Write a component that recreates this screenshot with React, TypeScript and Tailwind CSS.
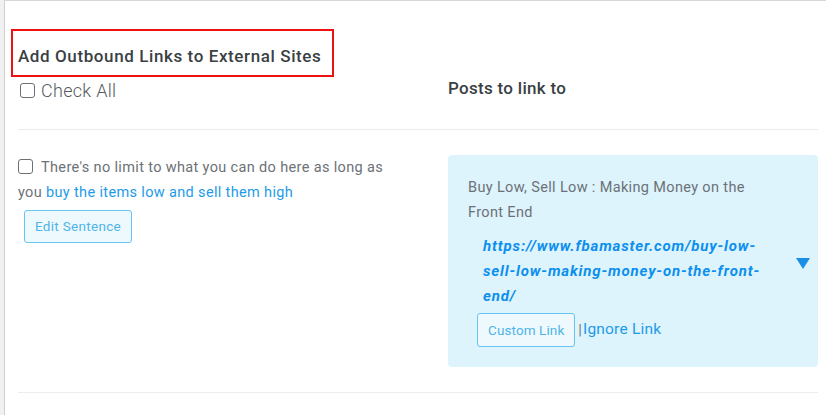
export default function App() {
  const font = { fontFamily: "Roboto, 'Liberation Sans', sans-serif" };
  return (
    <div className="flex h-[415px] w-[826px] overflow-hidden bg-white" style={font}>
      {/* admin sidebar edge */}
      <div className="w-[5px] shrink-0 border-r border-[#cfcfcf] bg-[#f1f1f1]"></div>

      <div className="flex-1 border-t border-[#d5d7d9] pl-[13px]">
        {/* header row */}
        <div className="flex h-[129px] w-[800px] border-b border-[#ececec]">
          <div className="w-[430px]">
            <div className="mt-[28px] ml-[-7px] w-[323px] border-2 border-[#ee1111] px-[5px] pt-[14px] pb-[8px]">
              <h2 className="text-[17px] font-medium leading-[22px] tracking-[0.6px] text-[#3a3f44]">
                Add Outbound Links to External Sites
              </h2>
            </div>
            <label className="flex items-center gap-[6px] pl-[2px] text-[18px] font-light leading-[27px] tracking-[0.3px] text-[#555b61]">
              <span className="h-[15px] w-[15px] rounded-[3px] border border-[#6b7075] bg-white"></span>
              Check All
            </label>
          </div>
          <div className="flex-1 pt-[76px]">
            <div className="text-[17px] font-medium leading-[22px] tracking-[0.3px] text-[#3a3f44]">Posts to link to</div>
          </div>
        </div>

        {/* link row */}
        <div className="flex w-[800px] border-b border-[#ececec] pt-[25px] pb-[25px]">
          <div className="w-[430px]">
            <p className="w-[375px] text-[14.5px] leading-[25px] tracking-[0.35px] text-[#6c7176]">
              <span className="mr-[8px] inline-block h-[15px] w-[15px] rounded-[3px] border border-[#6b7075] bg-white align-[-2px]"></span>
              There's no limit to what you can do here as long as you{" "}
              <a className="text-[#1e9be8]">buy the items low and sell them high</a>
            </p>
            <button className="mt-[5px] ml-[6px] h-[33px] rounded-[3px] border border-[#66c5f2] bg-[#eef9fe] px-[10px] text-[13.5px] tracking-[0.3px] text-[#4fb4e8]">
              Edit Sentence
            </button>
          </div>

          <div className="relative w-[370px] rounded-[4px] bg-[#ddf4fd] px-[20px] pt-[20px] pb-[20px]">
            <div className="w-[295px] text-[14.5px] leading-[25px] tracking-[0.35px] text-[#6c7176]">
              Buy Low, Sell Low : Making Money on the Front End
            </div>
            <div className="mt-[9px] w-[300px] pl-[15px] text-[15px] font-bold italic leading-[25px] tracking-[0.85px] text-[#0d8fee]">
              https://www.fbamaster.com/buy-low-sell-low-making-money-on-the-front-end/
            </div>
            <svg className="absolute right-[8px] top-[103px]" width="14" height="11" viewBox="0 0 14 11">
              <path d="M0 0 H14 L7 11 Z" fill="#1a8fe8" />
            </svg>
            <div className="mt-[4px] flex items-center pl-[9px]">
              <button className="h-[34px] rounded-[3px] border border-[#66c5f2] bg-[#eef9fe] px-[10px] text-[13.5px] tracking-[0.1px] text-[#4fb4e8]">
                Custom Link
              </button>
              <span className="ml-[3px] text-[15px] text-[#777]">|</span>
              <a className="ml-[1px] text-[15.5px] tracking-[0.2px] text-[#1e9be8]">Ignore Link</a>
            </div>
          </div>
        </div>
      </div>
    </div>
  );
}
